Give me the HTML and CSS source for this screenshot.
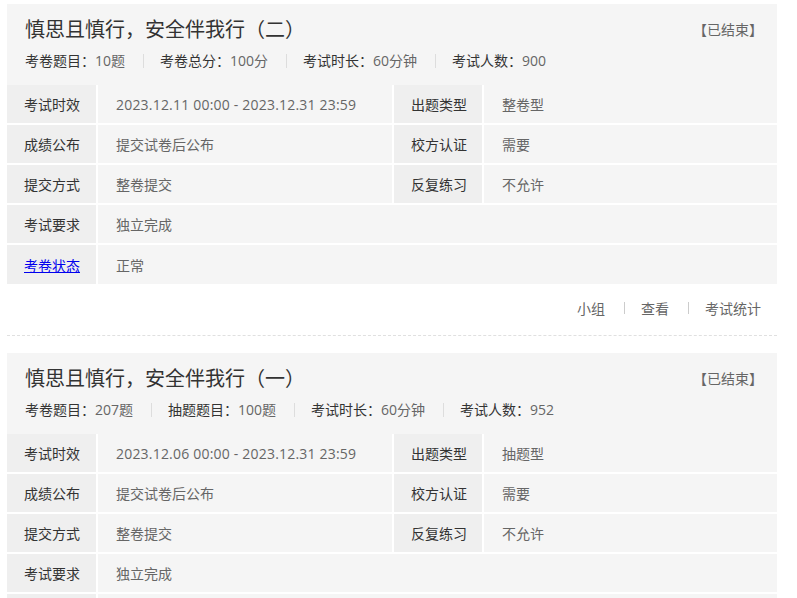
FILE: index.html
```html
<!DOCTYPE html>
<html lang="zh-CN">
<head>
    <meta charset="UTF-8">
    <title>考试列表</title>
    <link rel="stylesheet" href="styles.css">
</head>
<body>
    <div class="exam-list">
        <!-- 第二期 -->
        <div class="exam">
            <div class="exam-card">
                <div class="exam-head">
                    <div class="title-row">
                        <h2 class="exam-title">慎思且慎行，安全伴我行（二）</h2>
                        <span class="exam-status">【已结束】</span>
                    </div>
                    <div class="meta">
                        <span class="meta-item">考卷题目：<em>10题</em></span>
                        <span class="meta-item">考卷总分：<em>100分</em></span>
                        <span class="meta-item">考试时长：<em>60分钟</em></span>
                        <span class="meta-item">考试人数：<em>900</em></span>
                    </div>
                </div>
                <table class="info">
                    <colgroup><col class="c-label"><col class="c-value"><col class="c-label"><col></colgroup>
                    <tr>
                        <th>考试时效</th><td><span class="date">2023.12.11 00:00 - 2023.12.31 23:59</span></td>
                        <th>出题类型</th><td>整卷型</td>
                    </tr>
                    <tr>
                        <th>成绩公布</th><td>提交试卷后公布</td>
                        <th>校方认证</th><td>需要</td>
                    </tr>
                    <tr>
                        <th>提交方式</th><td>整卷提交</td>
                        <th>反复练习</th><td>不允许</td>
                    </tr>
                    <tr>
                        <th>考试要求</th><td colspan="3">独立完成</td>
                    </tr>
                    <tr>
                        <th><a href="#">考卷状态</a></th><td colspan="3">正常</td>
                    </tr>
                </table>
            </div>
            <div class="actions">
                <a href="#">小组</a>
                <a href="#">查看</a>
                <a href="#">考试统计</a>
            </div>
        </div>

        <!-- 第一期 -->
        <div class="exam">
            <div class="exam-card">
                <div class="exam-head">
                    <div class="title-row">
                        <h2 class="exam-title">慎思且慎行，安全伴我行（一）</h2>
                        <span class="exam-status">【已结束】</span>
                    </div>
                    <div class="meta">
                        <span class="meta-item">考卷题目：<em>207题</em></span>
                        <span class="meta-item">抽题题目：<em>100题</em></span>
                        <span class="meta-item">考试时长：<em>60分钟</em></span>
                        <span class="meta-item">考试人数：<em>952</em></span>
                    </div>
                </div>
                <table class="info">
                    <colgroup><col class="c-label"><col class="c-value"><col class="c-label"><col></colgroup>
                    <tr>
                        <th>考试时效</th><td><span class="date">2023.12.06 00:00 - 2023.12.31 23:59</span></td>
                        <th>出题类型</th><td>抽题型</td>
                    </tr>
                    <tr>
                        <th>成绩公布</th><td>提交试卷后公布</td>
                        <th>校方认证</th><td>需要</td>
                    </tr>
                    <tr>
                        <th>提交方式</th><td>整卷提交</td>
                        <th>反复练习</th><td>不允许</td>
                    </tr>
                    <tr>
                        <th>考试要求</th><td colspan="3">独立完成</td>
                    </tr>
                    <tr>
                        <th><a href="#">考卷状态</a></th><td colspan="3">正常</td>
                    </tr>
                </table>
            </div>
            <div class="actions">
                <a href="#">小组</a>
                <a href="#">查看</a>
                <a href="#">考试统计</a>
            </div>
        </div>
    </div>
</body>
</html>
```

FILE: styles.css
```css
/* General styling */
body {
    font-family: "Open Sans", "Noto Sans CJK SC", sans-serif;
    background-color: #fff;
    color: #333;
    margin: 0;
    padding: 4px 0 0 7px;
    font-size: 14px;
}
.exam-list {
    width: 770px;
}
.exam {
    border-bottom: 1px dashed #e0e0e0;
    margin-bottom: 17px;
}
.exam-card {
    background-color: #f5f5f5;
}
.exam-head {
    padding: 13px 14px 14px 18px;
}
.title-row {
    display: flex;
    justify-content: space-between;
    align-items: center;
    height: 26px;
}
.exam-title {
    margin: 0;
    font-size: 20px;
    font-weight: normal;
    line-height: 26px;
    color: #333;
}
.exam-status {
    color: #666;
    line-height: 20px;
}
.meta {
    display: flex;
    margin-top: 8px;
    line-height: 20px;
}
.meta-item {
    display: flex;
    align-items: center;
    color: #333;
}
.meta-item em {
    font-style: normal;
    color: #666;
}
.meta-item + .meta-item::before {
    content: "";
    width: 1px;
    height: 14px;
    background-color: #ddd;
    margin: 0 16px 0 18px;
}
/* Info table */
.info {
    width: 100%;
    border-collapse: collapse;
    table-layout: fixed;
}
.c-label {
    width: 90px;
}
.c-value {
    width: 296px;
}
.info th,
.info td {
    height: 38px;
    padding: 0 0 0 18px;
    text-align: left;
    font-weight: normal;
    border: 2px solid #fff;
    border-left: none;
    border-top: none;
    white-space: nowrap;
}
.info tr:last-child th,
.info tr:last-child td {
    height: 39px;
    border-bottom: none;
}
.info td:last-child {
    border-right: none;
}
.info th {
    background-color: #efefef;
    color: #333;
    padding-left: 17px;
}
.info td {
    background-color: #f5f5f5;
    color: #666;
}
.info .date {
    letter-spacing: 0.2px;
}
.info th a {
    color: #0000ee;
}
/* Footer links */
.actions {
    display: flex;
    justify-content: flex-end;
    align-items: center;
    height: 48px;
    padding: 0 16px 3px 0;
}
.actions a {
    display: flex;
    align-items: center;
    color: #666;
    text-decoration: none;
}
.actions a + a::before {
    content: "";
    width: 1px;
    height: 12px;
    background-color: #ccc;
    margin: 0 16px 0 19px;
}
```
